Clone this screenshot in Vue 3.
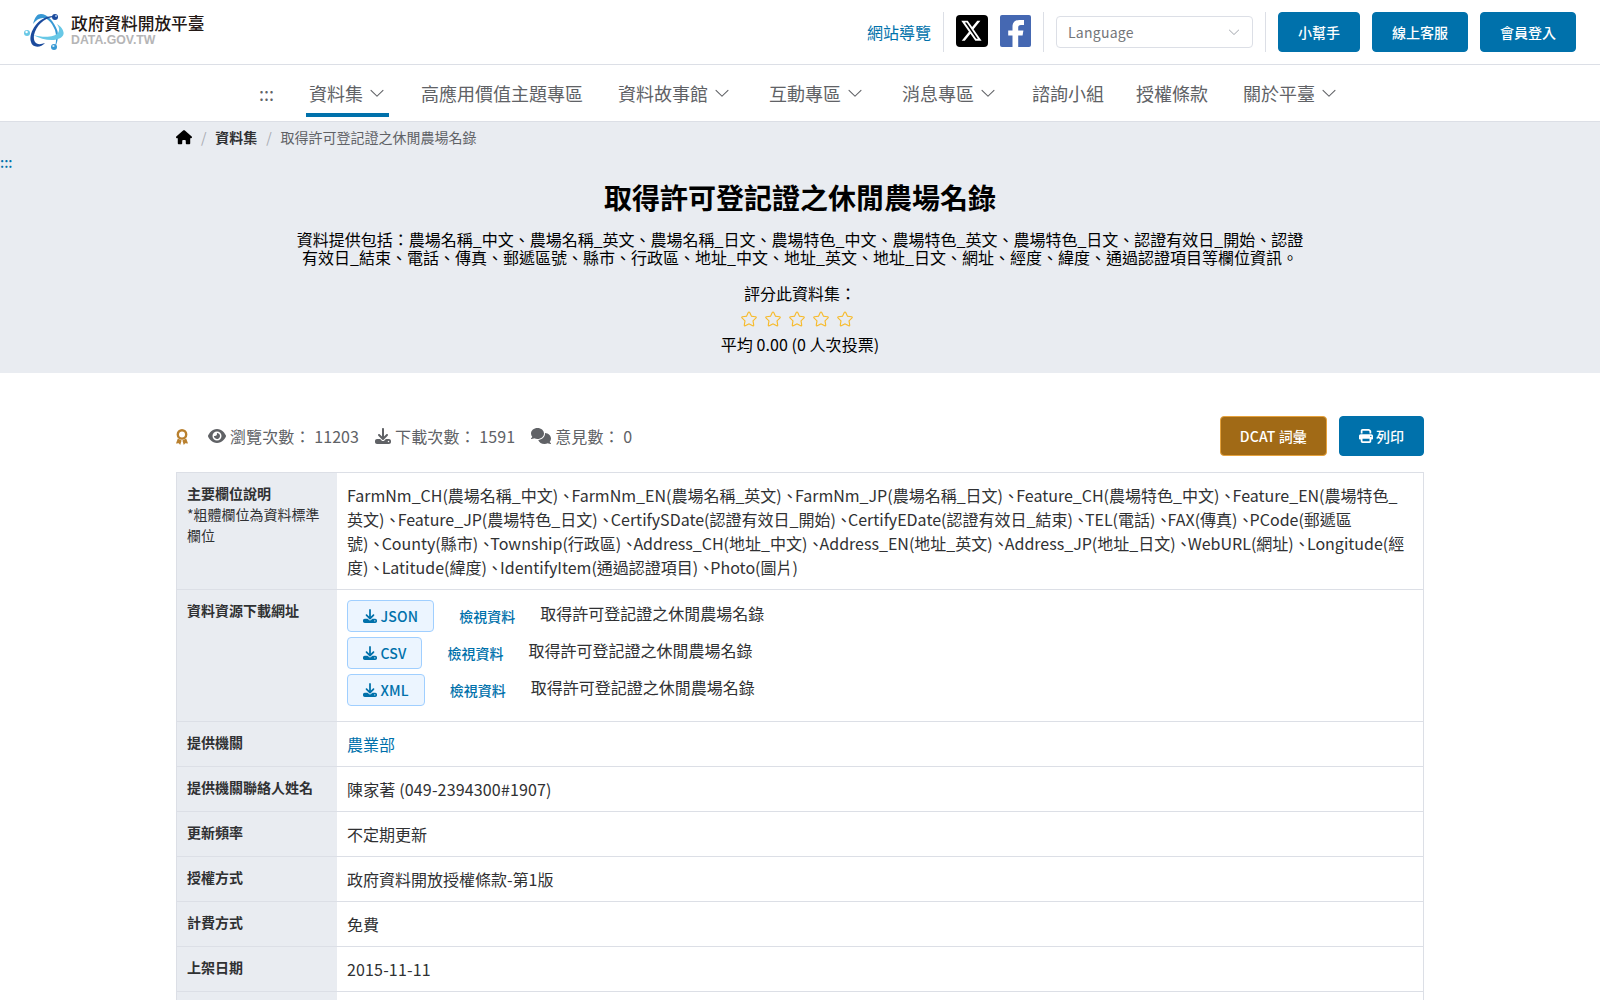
<template>
    <div class="page">
        <header class="top">
            <a class="logo">
                <svg width="40" height="38" viewBox="0 0 40 38">
                    <path d="M9 11C11 4 13 1 17 1C23 1 30 8 33.5 18C34.5 24 33.5 30 31 34C32.5 28 32.5 22 31 17C27 8 23 5 19 5C15 5 12 7 9 11Z" fill="#3798d4" />
                    <path d="M33 11C38 14 41 19 39 22.5C35 29 20 28 9 22C20 25 31 24 34 20C36 17 35 14 33 11Z" fill="#68c8e6" />
                    <path d="M29 4C20 5 12 13 10 22C9 30 13 33 21 30C17 35 8 35 7 29C4 19 15 3 29 3Z" fill="#1b4a9c" />
                    <circle cx="31" cy="4" r="3" fill="#1b4a9c" />
                    <circle cx="3" cy="20" r="3" fill="#68c8e6" />
                    <circle cx="30" cy="34" r="3" fill="#3798d4" />
                    <circle cx="32" cy="3" r="1" fill="#a9c4ea" />
                    <circle cx="2.6" cy="19" r="1.2" fill="#fff" />
                    <circle cx="29.4" cy="33" r="1.1" fill="#d5effa" />
                </svg>
                <span class="logo-text">
                    <b>政府資料開放平臺</b>
                    <i>DATA.GOV.TW</i>
                </span>
            </a>
            <div class="tools">
                <a class="sitemap">網站導覽</a>
                <span class="line"></span>
                <svg class="social" width="32" height="32" viewBox="0 0 32 32">
                    <rect width="32" height="32" rx="4" fill="#000" />
                    <path transform="translate(.73 -2.6) scale(.0655 .0715)" d="M361.1 116 257.3 234.6 379.4 396H283.8L209 298.1 123.3 396H75.8l111-126.9L69.7 116h98l67.7 89.5L313.6 116zM323.3 367.6 153.4 142.9H125.1L296.9 367.6z" fill="#fff" />
                </svg>
                <svg class="social" width="31" height="32" viewBox="0 0 31 32">
                    <rect width="31" height="32" rx="2" fill="#4568b2" />
                    <path d="M12.5 32V20.5H8.2V15.5H12.5V12C12.5 7.5 15 5 19.5 5H24V10H21C18.8 10 18.2 11 18.2 12.8V15.5H23.4L22.6 20.5H18.2V32Z" fill="#fff" />
                </svg>
                <span class="line"></span>
                <div class="select">
                    <span>Language</span>
                    <svg width="14" height="14" viewBox="0 0 1024 1024" fill="#a8abb2"><path :d="icons.down" /></svg>
                </div>
                <span class="line"></span>
                <button v-for="b in buttons" :key="b" class="btn">{{b}}</button>
            </div>
        </header>

        <nav class="nav">
            <a v-for="(n, i) in navs" :key="n.text" :class="{ active: i == 1 }" :style="{ marginLeft: n.gap + 'px' }">
                <span>{{n.text}}</span>
                <svg v-if="n.sub" width="18" height="18" viewBox="0 0 1024 1024" fill="currentColor"><path :d="icons.down" /></svg>
            </a>
        </nav>

        <section class="hero">
            <div class="crumb">
                <svg width="16" height="14.5" viewBox="0 0 576 512"><path :d="icons.home" /></svg>
                <em>/</em>
                <b>資料集</b>
                <em>/</em>
                <span>{{title}}</span>
            </div>
            <a class="anchor">:::</a>
            <h1>{{title}}</h1>
            <p class="desc">資料提供包括：農場名稱_中文、農場名稱_英文、農場名稱_日文、農場特色_中文、農場特色_英文、農場特色_日文、認證有效日_開始、認證<br>有效日_結束、電話、傳真、郵遞區號、縣市、行政區、地址_中文、地址_英文、地址_日文、網址、經度、緯度、通過認證項目等欄位資訊。</p>
            <div class="rate-label">評分此資料集：</div>
            <div class="stars">
                <svg v-for="s in 5" :key="s" width="18" height="18" viewBox="0 0 1024 1024" fill="#f7ba2a"><path :d="icons.star" /></svg>
            </div>
            <div class="avg">平均 0.00 (0 人次投票)</div>
        </section>

        <main class="main">
            <div class="bar">
                <svg class="medal" width="12" height="16" viewBox="0 0 12 16">
                    <circle cx="6" cy="5.4" r="4.2" fill="none" stroke="#b9802e" stroke-width="2.4" />
                    <path d="M1.8 9.6 5.6 11.4 4.2 16 2.8 14.2 0 14.6ZM10.2 9.6 6.4 11.4 7.8 16 9.2 14.2 12 14.6Z" fill="#b9802e" />
                </svg>
                <span class="stat eye"><svg width="18" height="16" viewBox="0 0 576 512"><path :d="icons.eye" /></svg>瀏覽次數： 11203</span>
                <span class="stat"><svg width="16" height="16" viewBox="0 0 512 512"><path :d="icons.download" /></svg>下載次數： 1591</span>
                <span class="stat"><svg width="20" height="16" viewBox="0 0 640 512"><path :d="icons.comments" /></svg>意見數： 0</span>
                <button class="btn dcat">DCAT 詞彙</button>
                <button class="btn print"><svg width="14" height="14" viewBox="0 0 512 512" fill="#fff"><path :d="icons.print" /></svg>列印</button>
            </div>

            <table>
                <tbody>
                    <tr>
                        <th>主要欄位說明<div class="note">*粗體欄位為資料標準欄位</div></th>
                        <td>
                            <div v-for="line in fields" :key="line" class="fields">
                                <template v-for="(f, i) in line.split('、')" :key="i"><span v-if="i" class="sep" :class="{ tight: isTight(f) }">、</span>{{f}}</template>
                            </div>
                        </td>
                    </tr>
                    <tr>
                        <th>資料資源下載網址</th>
                        <td>
                            <div v-for="f in files" :key="f" class="file">
                                <a class="down"><svg width="14" height="14" viewBox="0 0 512 512" fill="currentColor"><path :d="icons.download" /></svg>{{f}}</a>
                                <a class="view">檢視資料</a>
                                <span>{{title}}</span>
                            </div>
                        </td>
                    </tr>
                    <tr v-for="r in rows" :key="r.name">
                        <th>{{r.name}}</th>
                        <td :class="{ num: r.num }"><a v-if="r.link">{{r.value}}</a><template v-else>{{r.value}}</template></td>
                    </tr>
                </tbody>
            </table>
        </main>
    </div>
</template>

<script setup>
const title = '取得許可登記證之休閒農場名錄'
const buttons = ['小幫手', '線上客服', '會員登入']
const navs = [
    { text: ':::', gap: 0 },
    { text: '資料集', sub: true, gap: 29 },
    { text: '高應用價值主題專區', gap: 29 },
    { text: '資料故事館', sub: true, gap: 29 },
    { text: '互動專區', sub: true, gap: 32 },
    { text: '消息專區', sub: true, gap: 32 },
    { text: '諮詢小組', gap: 29 },
    { text: '授權條款', gap: 26 },
    { text: '關於平臺', sub: true, gap: 29 }
]
// 一行一筆
const fields = [
    'FarmNm_CH(農場名稱_中文)、FarmNm_EN(農場名稱_英文)、FarmNm_JP(農場名稱_日文)、Feature_CH(農場特色_中文)、Feature_EN(農場特色_',
    '英文)、Feature_JP(農場特色_日文)、CertifySDate(認證有效日_開始)、CertifyEDate(認證有效日_結束)、TEL(電話)、FAX(傳真)、PCode(郵遞區',
    '號)、County(縣市)、Township(行政區)、Address_CH(地址_中文)、Address_EN(地址_英文)、Address_JP(地址_日文)、WebURL(網址)、Longitude(經',
    '度)、Latitude(緯度)、IdentifyItem(通過認證項目)、Photo(圖片)'
]
// 這些字母前面的頓號要再靠近一點
function isTight(f){
    return /^(T|A|P|W|FAX|CertifyE)/.test(f)
}
const files = ['JSON', 'CSV', 'XML']
const rows = [
    { name: '提供機關', value: '農業部', link: true },
    { name: '提供機關聯絡人姓名', value: '陳家著 (049-2394300#1907)', num: true },
    { name: '更新頻率', value: '不定期更新' },
    { name: '授權方式', value: '政府資料開放授權條款-第1版' },
    { name: '計費方式', value: '免費' },
    { name: '上架日期', value: '2015-11-11', num: true },
    { name: '', value: '' }
]
const icons = {
    down: 'M831.872 340.864 512 652.672 192.128 340.864a30.592 30.592 0 0 0-42.752 0 29.12 29.12 0 0 0 0 41.6L489.664 714.24a32 32 0 0 0 44.672 0l340.288-331.712a29.12 29.12 0 0 0 0-41.728 30.592 30.592 0 0 0-42.752 0z',
    star: 'm512 747.84 228.16 119.936a6.4 6.4 0 0 0 9.28-6.72l-43.52-254.08 184.512-179.904a6.4 6.4 0 0 0-3.52-10.88l-255.104-37.12L517.76 147.904a6.4 6.4 0 0 0-11.52 0L392.192 379.072l-255.104 37.12a6.4 6.4 0 0 0-3.52 10.88L318.08 606.976l-43.584 254.08a6.4 6.4 0 0 0 9.28 6.72zM313.6 924.48a70.4 70.4 0 0 1-102.144-74.24l37.888-220.928L88.96 472.96A70.4 70.4 0 0 1 128 352.896l221.76-32.256 99.2-200.96a70.4 70.4 0 0 1 126.208 0l99.2 200.96 221.824 32.256a70.4 70.4 0 0 1 39.04 120.064L774.72 629.376l37.888 220.864a70.4 70.4 0 0 1-102.144 74.24L512 820.096l-198.4 104.32z',
    home: 'M575.8 255.5c0 18-15 32.1-32 32.1h-32l.7 160.2c0 2.7-.2 5.4-.5 8.1V472c0 22.1-17.9 40-40 40H456c-1.1 0-2.2 0-3.3-.1c-1.4 .1-2.8 .1-4.2 .1H416 392c-22.1 0-40-17.9-40-40V448 384c0-17.7-14.3-32-32-32H256c-17.7 0-32 14.3-32 32v64 24c0 22.1-17.9 40-40 40H160 128.1c-1.5 0-3-.1-4.5-.2c-1.2 .1-2.4 .2-3.6 .2H104c-22.1 0-40-17.9-40-40V360c0-.9 0-1.9 .1-2.8V287.6H32c-18 0-32-14-32-32.1c0-9 3-17 10-24L266.4 8c7-7 15-8 22-8s15 2 21 7L564.8 231.5c8 7 12 15 11 24z',
    eye: 'M288 32c-80.8 0-145.5 36.8-192.6 80.6C48.6 156 17.3 208 2.5 243.7c-3.3 7.9-3.3 16.7 0 24.6C17.3 304 48.6 356 95.4 399.4C142.5 443.2 207.2 480 288 480s145.5-36.8 192.6-80.6c46.8-43.5 78.1-95.4 93-131.1c3.3-7.9 3.3-16.7 0-24.6c-14.9-35.7-46.2-87.7-93-131.1C433.5 68.8 368.8 32 288 32zM144 256a144 144 0 1 1 288 0 144 144 0 1 1 -288 0zm144-64c0 35.3-28.7 64-64 64c-7.1 0-13.9-1.2-20.3-3.3c-5.5-1.8-11.9 1.6-11.7 7.4c.3 6.9 1.3 13.8 3.2 20.7c13.7 51.2 66.4 81.6 117.6 67.9s81.6-66.4 67.9-117.6c-11.1-41.5-47.8-69.4-88.6-71.1c-5.8-.2-9.2 6.1-7.4 11.7c2.1 6.4 3.3 13.2 3.3 20.3z',
    download: 'M288 32c0-17.7-14.3-32-32-32s-32 14.3-32 32V274.7l-73.4-73.4c-12.5-12.5-32.8-12.5-45.3 0s-12.5 32.8 0 45.3l128 128c12.5 12.5 32.8 12.5 45.3 0l128-128c12.5-12.5 12.5-32.8 0-45.3s-32.8-12.5-45.3 0L288 274.7V32zM64 352c-35.3 0-64 28.7-64 64v32c0 35.3 28.7 64 64 64H448c35.3 0 64-28.7 64-64V416c0-35.3-28.7-64-64-64H346.5l-45.3 45.3c-25 25-65.5 25-90.5 0L165.5 352H64zm368 56a24 24 0 1 1 0 48 24 24 0 1 1 0-48z',
    comments: 'M208 352c114.9 0 208-78.8 208-176S322.9 0 208 0S0 78.8 0 176c0 38.6 14.7 74.3 39.6 103.4c-3.5 9.4-8.7 17.7-14.2 24.7c-4.8 6.2-9.7 11-13.3 14.3c-1.8 1.6-3.3 2.9-4.3 3.7c-.5 .4-.9 .7-1.1 .8l-.2 .2C1 327.2-1.4 334.4 .8 340.9S9.1 352 16 352c21.8 0 43.8-5.6 62.1-12.5c9.2-3.5 17.8-7.4 25.2-11.4C134.1 343.3 169.8 352 208 352zM448 176c0 112.3-99.1 196.9-216.5 207C255.8 457.4 336.4 512 432 512c38.2 0 73.9-8.7 104.7-23.9c7.5 4 16 7.9 25.2 11.4c18.3 6.9 40.3 12.5 62.1 12.5c6.9 0 13.1-4.5 15.2-11.1c2.1-6.6-.2-13.8-5.8-17.9l-.2-.2c-.2-.2-.6-.4-1.1-.8c-1-.8-2.5-2-4.3-3.7c-3.6-3.3-8.5-8.1-13.3-14.3c-5.5-7-10.7-15.4-14.2-24.7c24.9-29 39.6-64.7 39.6-103.4c0-92.8-84.9-168.9-192.6-175.5c.4 5.1 .6 10.3 .6 15.5z',
    print: 'M128 0C92.7 0 64 28.7 64 64v96h64V64H354.7L384 93.3V160h64V93.3c0-17-6.7-33.3-18.7-45.3L400 18.7C388 6.7 371.7 0 354.7 0H128zM384 352v32 64H128V384 368 352H384zm64 32h32c17.7 0 32-14.3 32-32V256c0-35.3-28.7-64-64-64H64c-35.3 0-64 28.7-64 64v96c0 17.7 14.3 32 32 32H64v64c0 35.3 28.7 64 64 64H384c35.3 0 64-28.7 64-64V384zM432 248a24 24 0 1 1 0 48 24 24 0 1 1 0-48z'
}
</script>

<style>
body {
    margin: 0;
    overflow: hidden;
}
</style>

<style scoped>
.page {
    height: 1000px;
    overflow: hidden;
    background: #fff;
    color: #303133;
    font-family: "Noto Sans CJK TC", sans-serif;
    font-size: 16px;
    line-height: 24px;
}

.page * {
    box-sizing: border-box;
}

svg {
    display: block;
    flex: none;
}

a {
    color: #0071ab;
}

.top {
    display: flex;
    justify-content: space-between;
    height: 65px;
    padding: 12px 24px;
    border-bottom: 1px solid #dcdfe6;
}

.logo {
    display: flex;
    gap: 7px;
    padding-top: 1px;
}

.logo-text {
    display: flex;
    flex-direction: column;
}

.logo-text b {
    color: #231815;
    font-size: 16.7px;
    font-weight: 500;
    line-height: 21px;
}

.logo-text i {
    color: #b5b5b6;
    font: bold 12.3px/12px "Liberation Sans", sans-serif;
}

.tools {
    display: flex;
    align-items: center;
    gap: 12px;
    height: 40px;
}

.social {
    margin-bottom: 2px;
}

.line {
    width: 1px;
    height: 40px;
    background: #dcdfe6;
}

.select {
    display: flex;
    align-items: center;
    justify-content: space-between;
    width: 197px;
    height: 32px;
    padding: 0 11px;
    border: 1px solid #dcdfe6;
    border-radius: 4px;
    color: #73767a;
    font-size: 14px;
    letter-spacing: .25px;
}

.btn {
    height: 40px;
    padding: 0 19px;
    border: 1px solid #0071ab;
    border-radius: 4px;
    background: #0071ab;
    color: #fff;
    font-family: inherit;
    font-size: 14px;
    font-weight: 500;
}

.nav {
    display: flex;
    justify-content: flex-start;
    height: 57px;
    padding-left: 256px;
    border-bottom: 1px solid #dcdfe6;
}

.nav a {
    display: flex;
    align-items: center;
    gap: 5px;
    height: 52px;
    padding: 8px 3px 0;
    border-bottom: 4px solid transparent;
    color: #606266;
    font-size: 18px;
    white-space: nowrap;
}

.nav a.active {
    border-bottom-color: #0071ab;
}

.hero {
    height: 251px;
    background: #e9ecf1;
    color: #000;
    text-align: center;
}

.crumb {
    display: flex;
    align-items: center;
    height: 31px;
    padding-left: 176px;
    font-size: 14px;
}

.crumb em {
    margin: 0 8.9px;
    padding-bottom: 2px;
    color: #a8abb2;
    font-style: normal;
}

.crumb b {
    padding-bottom: 2px;
    color: #303133;
}

.crumb span {
    padding-bottom: 2px;
    color: #606266;
}

.anchor {
    display: block;
    height: 24px;
    font-size: 14px;
    font-weight: 500;
    line-height: 19px;
    text-align: left;
}

h1 {
    margin: 0;
    padding-top: 2px;
    font-size: 28px;
    line-height: 36px;
}

.desc {
    margin: 15px 0 0;
    line-height: 18px;
}

.rate-label {
    margin-top: 15px;
}

.stars {
    display: flex;
    justify-content: center;
    gap: 6px;
    margin: 5px 6px 0 0;
}

.avg {
    margin-top: 4px;
    letter-spacing: .06px;
}

.main {
    width: 1248px;
    margin: 43px auto 0;
}

.bar {
    display: flex;
    align-items: center;
    height: 40px;
    margin-bottom: 16px;
    color: #606266;
}

.medal {
    margin-top: 2px;
}

.stat {
    display: flex;
    align-items: center;
    gap: 4px;
    margin-left: 16px;
    letter-spacing: .1px;
    white-space: pre;
}

.stat svg {
    fill: #606266;
}

.eye {
    margin-left: 20px;
}

.dcat {
    margin-left: auto;
    border-color: #e6a23c;
    background: #a16a16;
    letter-spacing: .13px;
}

.print {
    display: flex;
    align-items: center;
    gap: 3px;
    margin-left: 12px;
}

table {
    width: 100%;
    border: 1px solid #dcdfe6;
    border-collapse: collapse;
    table-layout: fixed;
}

tr {
    height: 45px;
    border-bottom: 1px solid #dcdfe6;
}

th,
td {
    padding: 10px;
    text-align: left;
    vertical-align: top;
}

th {
    width: 160px;
    padding-top: 9.5px;
    background: #e9ecf1;
    font-size: 14px;
    line-height: 21px;
}

td {
    padding-left: 10.5px;
}

.note {
    font-weight: normal;
}

.fields {
    white-space: nowrap;
}

.sep {
    letter-spacing: -2.8px;
}

.sep.tight {
    letter-spacing: -3.9px;
}

.num {
    letter-spacing: .16px;
}

.file {
    display: flex;
    align-items: center;
    height: 32px;
    margin-bottom: 5px;
}

.down {
    display: flex;
    align-items: center;
    gap: 3.5px;
    height: 32px;
    padding: 0 15px;
    border: 1px solid #a0cfff;
    border-radius: 4px;
    background: #ecf5ff;
    font-size: 14px;
    font-weight: 500;
    letter-spacing: .15px;
}

.view {
    margin: 0 25px;
    font-size: 14px;
    font-weight: 500;
}

.file span {
    padding-bottom: 6px;
}
</style>
